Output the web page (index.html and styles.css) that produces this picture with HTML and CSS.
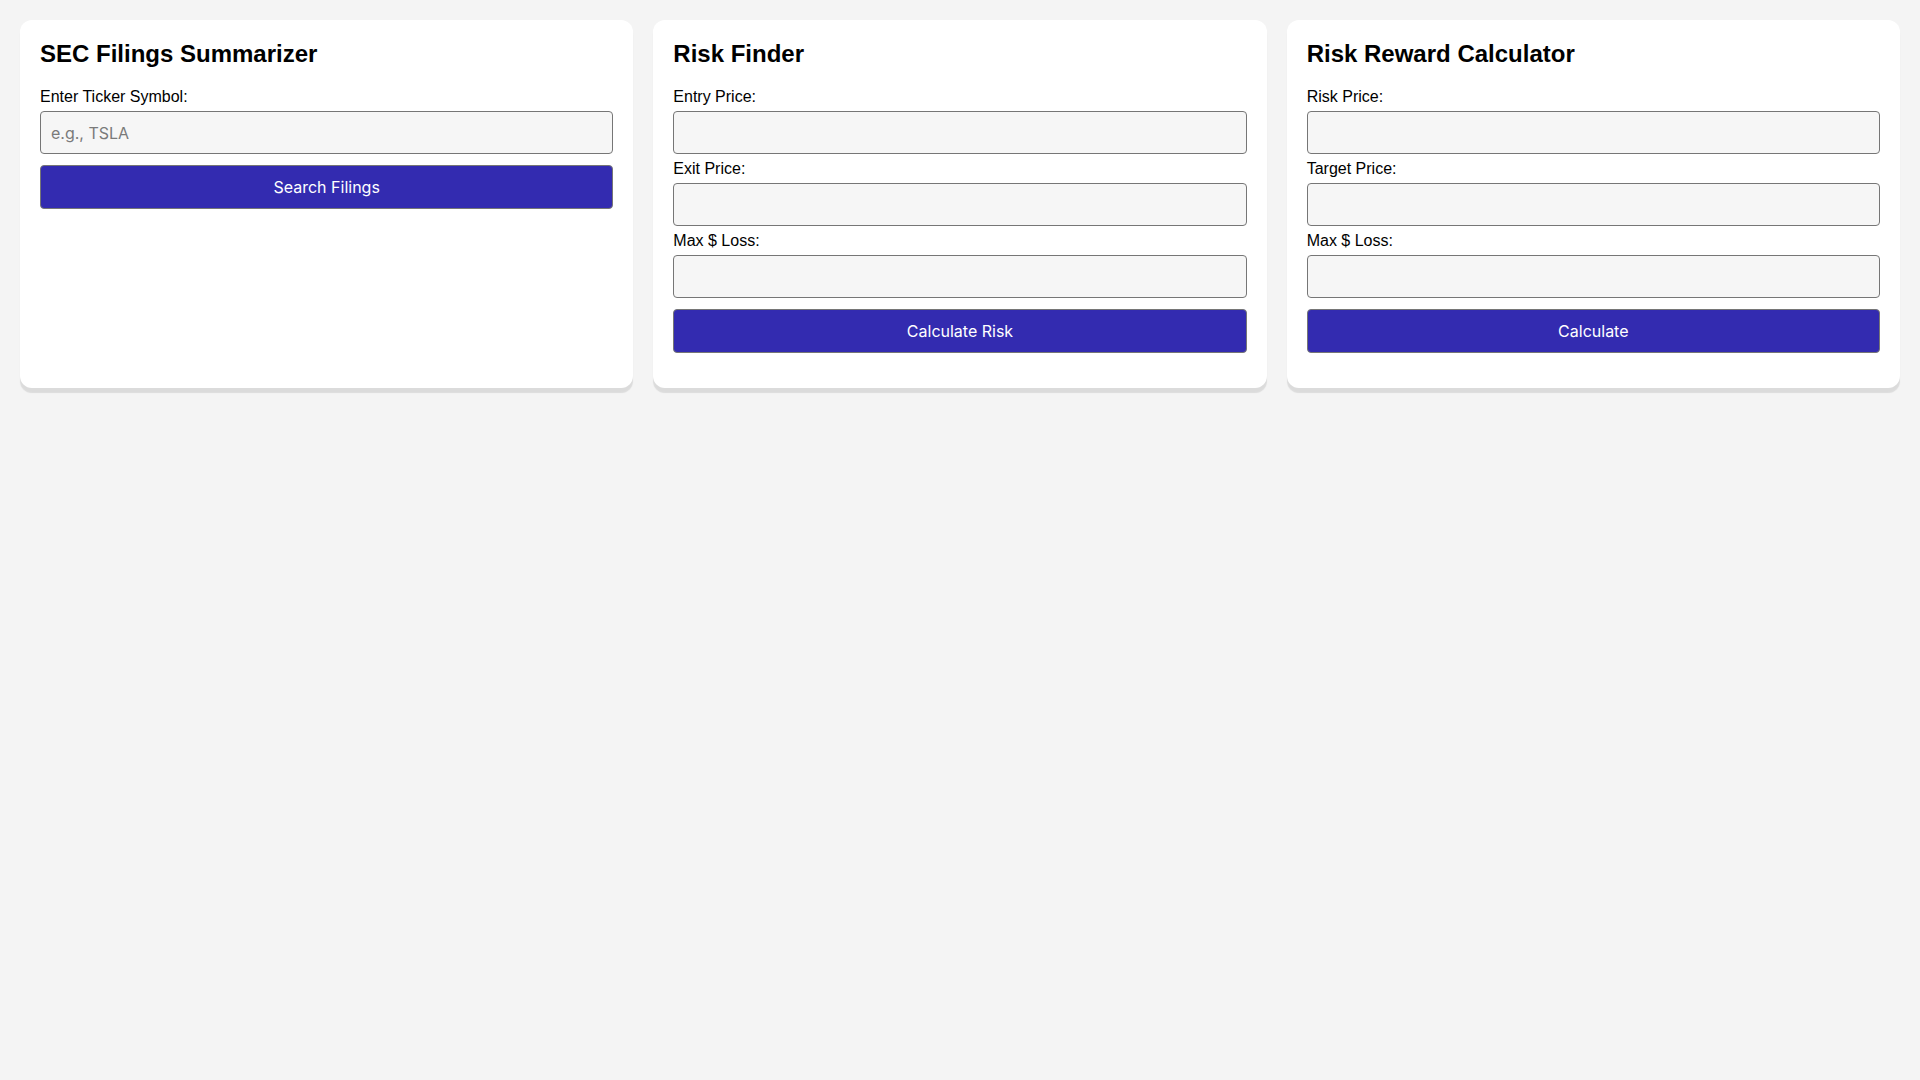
FILE: index.html
```html
<!DOCTYPE html>
<html lang="en">
<head>
    <meta charset="UTF-8">
    <meta name="viewport" content="width=device-width, initial-scale=1.0">
    <title>Trading Tools</title>
    <link rel="stylesheet" href="styles.css">
</head>
<body>
    <main class="tools">
        <!-- SEC Filings -->
        <section class="card">
            <h2>SEC Filings Summarizer</h2>
            <label for="ticker">Enter Ticker Symbol:</label>
            <input type="text" id="ticker" placeholder="e.g., TSLA">
            <button class="btn">Search Filings</button>
            <div class="result" id="filings-result"></div>
        </section>

        <!-- Risk Finder -->
        <section class="card">
            <h2>Risk Finder</h2>
            <label for="entry-price">Entry Price:</label>
            <input type="number" id="entry-price">
            <label for="exit-price">Exit Price:</label>
            <input type="number" id="exit-price">
            <label for="max-loss">Max $ Loss:</label>
            <input type="number" id="max-loss">
            <button class="btn">Calculate Risk</button>
            <div class="result" id="risk-result"></div>
        </section>

        <!-- Risk Reward -->
        <section class="card">
            <h2>Risk Reward Calculator</h2>
            <label for="risk-price">Risk Price:</label>
            <input type="number" id="risk-price">
            <label for="target-price">Target Price:</label>
            <input type="number" id="target-price">
            <label for="rr-max-loss">Max $ Loss:</label>
            <input type="number" id="rr-max-loss">
            <button class="btn">Calculate</button>
            <div class="result" id="rr-result"></div>
        </section>
    </main>
</body>
</html>
```

FILE: styles.css
```css
body {
    margin: 0;
    padding: 20px;
    font-family: "Liberation Sans", Arial, sans-serif;
    background-color: #f4f4f4;
    color: #000;
}
.tools {
    display: grid;
    grid-template-columns: repeat(3, 1fr);
    gap: 20px;
}
.card {
    background: #fff;
    border-radius: 12px;
    padding: 20px;
    display: flex;
    flex-direction: column;
    box-shadow: 0 5px 1px rgba(0, 0, 0, 0.1);
}
.card h2 {
    margin: 0 0 20px;
    font-size: 24px;
    font-weight: bold;
}
.card label {
    font-size: 16px;
    margin-bottom: 5px;
}
.card input {
    box-sizing: border-box;
    height: 43px;
    padding: 0 10px;
    margin: 0 0 6px;
    font-family: Inter, "Noto Sans", sans-serif;
    font-size: 16px;
    background: #f6f6f6;
    border: 1px solid #767676;
    border-radius: 4px;
}
.card input::placeholder {
    color: #7a7a7a;
}
.btn {
    height: 44px;
    margin-top: 5px;
    font-family: Inter, "Noto Sans", sans-serif;
    font-size: 16px;
    color: #fff;
    background-color: #332bb0;
    border: 1px solid #767676;
    border-radius: 4px;
    cursor: pointer;
}
.result {
    margin-top: 15px;
}
```
